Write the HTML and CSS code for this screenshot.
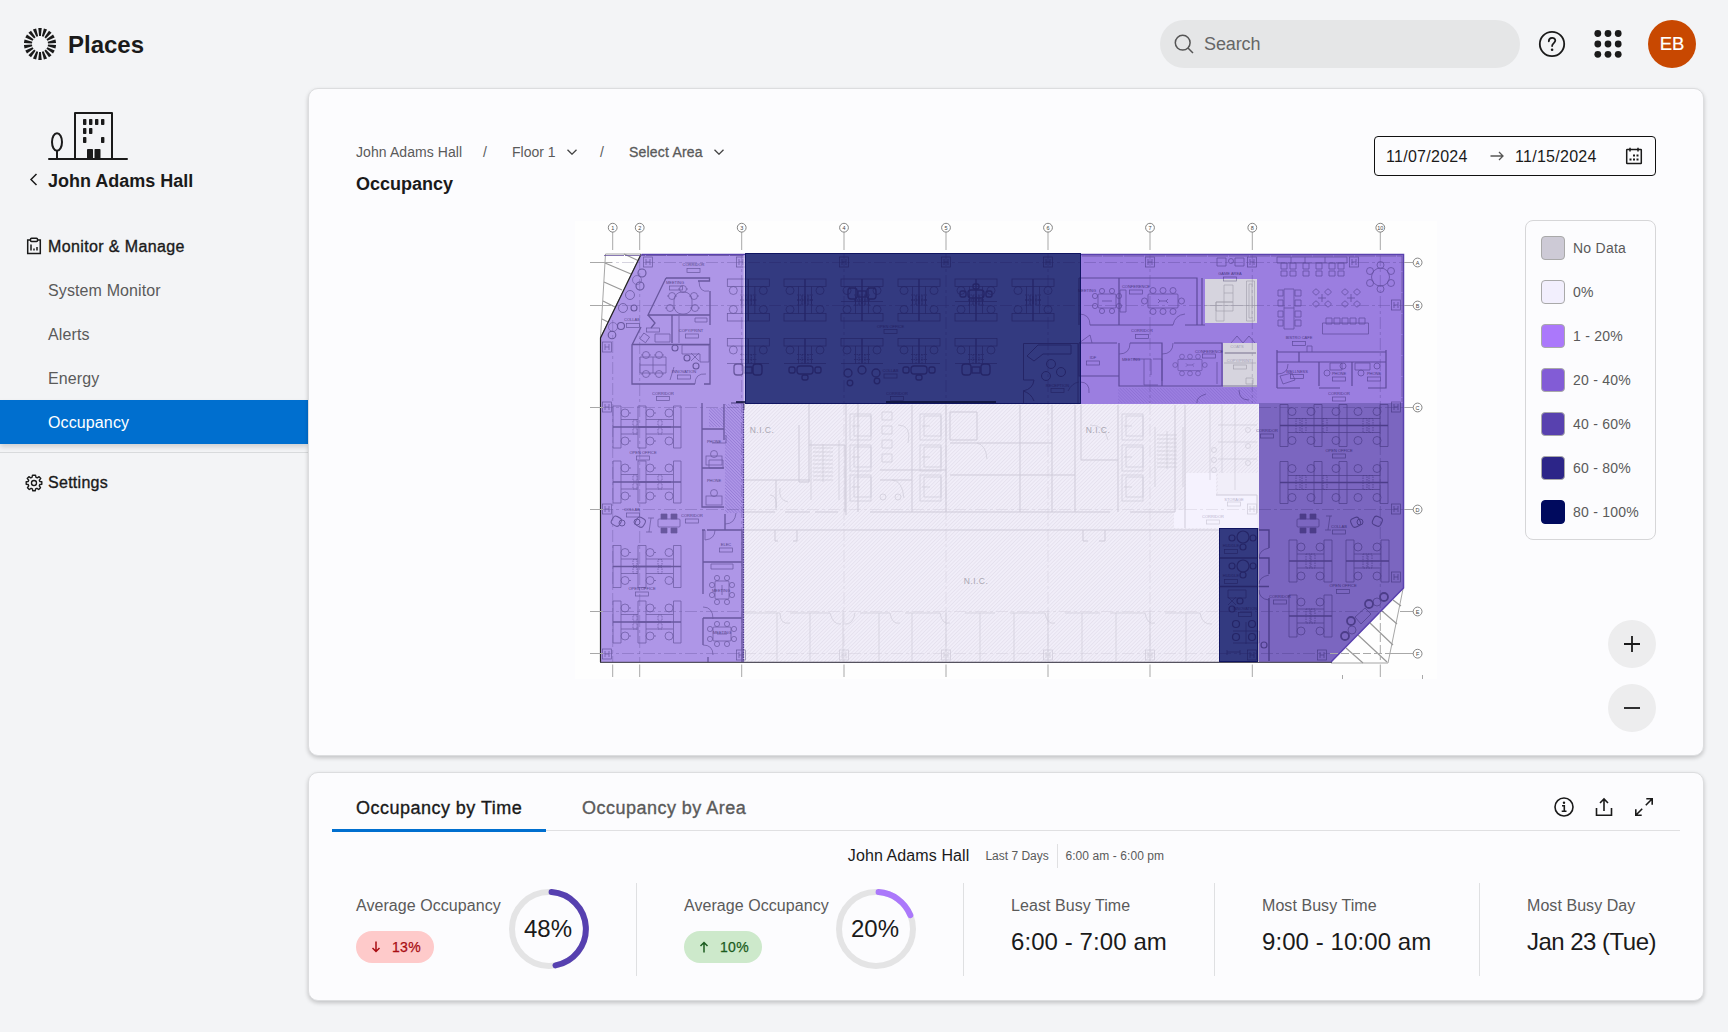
FILE: index.html
```html
<!DOCTYPE html>
<html lang="en">
<head>
<meta charset="utf-8">
<title>Places - Occupancy</title>
<link rel="stylesheet" href="styles.css">
</head>
<body>
<header class="topbar">
  <div class="brand">
    <svg class="logo" width="32" height="32" viewBox="-16 -16 32 32">
      <defs><path id="ray" d="M-1.700-16H1.700L.9-8H-.9Z"/><g id="rays"><use href="#ray"/><use href="#ray" transform="rotate(20)"/><use href="#ray" transform="rotate(40)"/><use href="#ray" transform="rotate(60)"/><use href="#ray" transform="rotate(80)"/><use href="#ray" transform="rotate(100)"/><use href="#ray" transform="rotate(120)"/><use href="#ray" transform="rotate(140)"/><use href="#ray" transform="rotate(160)"/></g></defs>
      <use href="#rays"/><use href="#rays" transform="rotate(180)"/>
    </svg>
    <span class="brand-name">Places</span>
  </div>
  <div class="tools">
    <div class="search">
      <svg width="20" height="20" viewBox="0 0 20 20" fill="none" stroke="currentColor" stroke-width="1.500"><circle cx="8.700" cy="8.700" r="7.400"/><path d="M14 14l5 5"/></svg>
      <span>Search</span>
    </div>
    <svg class="help" width="28" height="28" viewBox="0 0 28 28" fill="none" stroke="#1a1a1a" stroke-width="1.800"><circle cx="14" cy="14" r="12.200"/><path d="M10.800 11.300c0-4.600 6.500-4.400 6.500-.7 0 2.400-3.200 2.600-3.200 5.400" stroke-linecap="round"/><circle cx="14.100" cy="19.700" r="1.300" fill="#1a1a1a" stroke="none"/></svg>
    <svg class="apps" width="28" height="28" viewBox="0 0 28 28" fill="#1a1a1a"><circle cx="3.800" cy="3.500" r="3.400"/><circle cx="14" cy="3.500" r="3.400"/><circle cx="24.200" cy="3.500" r="3.400"/><circle cx="3.800" cy="14" r="3.400"/><circle cx="14" cy="14" r="3.400"/><circle cx="24.200" cy="14" r="3.400"/><circle cx="3.800" cy="24.300" r="3.400"/><circle cx="14" cy="24.300" r="3.400"/><circle cx="24.200" cy="24.300" r="3.400"/></svg>
    <div class="avatar">EB</div>
  </div>
</header>
<div class="shell">
  <nav class="sidebar">
    <svg class="building" width="80" height="50" viewBox="0 0 80 50" fill="none" stroke="#1a1a1a" stroke-width="2" stroke-linecap="round" stroke-linejoin="round">
      <path d="M1 48H79M27 48V2H64V48M9 47V40"/><ellipse cx="9" cy="31" rx="5" ry="8.800"/>
      <g fill="#1a1a1a" stroke="none"><rect x="35" y="8" width="3.400" height="6" rx=".8"/><rect x="41" y="8" width="3.400" height="6" rx=".8"/><rect x="47" y="8" width="3.400" height="6" rx=".8"/><rect x="53" y="8" width="3.400" height="6" rx=".8"/><rect x="35" y="17" width="3.400" height="6" rx=".8"/><rect x="41" y="17" width="3.400" height="6" rx=".8"/><rect x="35" y="26" width="3.400" height="6" rx=".8"/><rect x="53" y="26" width="3.400" height="6" rx=".8"/><rect x="39" y="38" width="6" height="10" rx=".8"/><rect x="46.500" y="38" width="6" height="10" rx=".8"/></g>
    </svg>
    <div class="site"><svg width="9" height="14" viewBox="0 0 9 14" fill="none" stroke="#1a1a1a" stroke-width="1.500"><path d="M7.500 1L2 6.500l5.500 5.500"/></svg><span>John Adams Hall</span></div>
    <div class="group">
      <svg width="16" height="18" viewBox="0 0 16 18" fill="none" stroke="#1a1a1a" stroke-width="1.500"><path d="M4 3H1.700V16.500H14.300V3H12"/><rect x="4.500" y="1.200" width="7" height="3.300" rx="1"/><path d="M5 7.500V13.500M8 11.500V13.500M11 10V13.500"/></svg>
      <span class="group-name">Monitor &amp; Manage</span>
    </div>
    <a class="item">System Monitor</a>
    <a class="item">Alerts</a>
    <a class="item">Energy</a>
    <a class="item active">Occupancy</a>
    <div class="group settings">
      <svg width="18" height="18" viewBox="-9 -9 18 18" fill="none" stroke="#1a1a1a" stroke-width="1.400" stroke-linejoin="round"><circle r="2.500"/><path d="M-1.500-7.800H1.500L2-5.700L3.300-5.100L5.100-6.300L6.800-4.600L5.300-2.800L5.800-1.500L7.800-1.200V1.200L5.800 1.500L5.300 2.800L6.500 4.700L4.700 6.500L2.900 5.300L1.600 5.800L1.200 7.800H-1.200L-1.600 5.800L-2.900 5.300L-4.700 6.500L-6.500 4.700L-5.300 2.800L-5.800 1.500L-7.800 1.200V-1.200L-5.800-1.500L-5.300-2.800L-6.800-4.600L-5.100-6.300L-3.300-5.100L-2-5.700Z"/></svg>
      <span class="group-name">Settings</span>
    </div>
  </nav>
  <main class="main">
    <section class="card map-card">
      <div class="map-head">
        <div>
          <div class="crumbs">
            <span class="c-site">John Adams Hall</span><span class="slash">/</span><span class="c-floor">Floor 1</span>
            <svg class="chev" width="10" height="6" viewBox="0 0 10 6"><path d="M.5.7L5 5.200L9.500.7"/></svg>
            <span class="slash s2">/</span><span class="c-area">Select Area</span>
            <svg class="chev" width="10" height="6" viewBox="0 0 10 6"><path d="M.5.7L5 5.200L9.500.7"/></svg>
          </div>
          <h1>Occupancy</h1>
        </div>
        <div class="dates">
          <span class="date">11/07/2024</span>
          <svg width="14" height="10" viewBox="0 0 14 10" fill="none" stroke="#555" stroke-width="1.300"><path d="M.5 5H13M9 1L13 5L9 9"/></svg>
          <span class="date">11/15/2024</span>
          <svg class="cal" width="18" height="18" viewBox="0 0 18 18" fill="none" stroke="#1a1a1a" stroke-width="1.500"><rect x="1.700" y="2.500" width="14.600" height="14" rx=".5"/><path d="M5 .7V4.500M13 .7V4.500"/><path d="M8 8.500H10M11.500 8.500H13.500M4.500 12.500H6.500M8 12.500H10M11.500 12.500H13.500" stroke-width="2"/></svg>
        </div>
      </div>
      <div class="map-body">
        <svg class="plan" width="862" height="458" viewBox="575 221 862 458" fill="none">
          <defs>
            <pattern id="hatch" width="2.600" height="2.600" patternUnits="userSpaceOnUse" patternTransform="rotate(45)"><path d="M0 0V2.600" stroke="#e4e0ed" stroke-width="1.600"/></pattern>
            <pattern id="hatch-dark" width="2.200" height="2.200" patternUnits="userSpaceOnUse" patternTransform="rotate(-45)"><path d="M0 0V2.200" stroke="#6a50b8" stroke-width=".9"/></pattern>
            <g id="seat"><circle r="3.500"/><path d="M-3.500 0H-5M3.500 0H5"/></g>
            <g id="bay"><rect x="-21" y="0" width="42" height="7.500"/><path d="M0 0V25" stroke-width="1.300"/><path d="M-6.500 7.500V25M6.500 7.500V25"/><path d="M-8 16H8M-8 21H8M-3 16V25M3 16V25" stroke-dasharray="1.500 1"/><circle cx="-15" cy="11.500" r="4"/><circle cx="15" cy="11.500" r="4"/></g>
            <g id="bay2"><use href="#bay"/><use href="#bay" transform="matrix(1 0 0 -1 0 42)"/></g>
            <g id="desk"><path d="M0 0H8V42H0ZM8 13.500H25M8 28H25"/><path d="M0 21H33" stroke-width="1.300"/><circle cx="12" cy="7" r="4"/><circle cx="12" cy="35" r="4"/><path d="M16 7H18M16 35H18"/><path d="M20 14h4v6h-4zM20 22h4v6h-4z" stroke-dasharray="1.500 1"/></g>
            <g id="desks"><use href="#desk"/><use href="#desk" x="25"/><path d="M60.500 0H68V42H60.500ZM50 13.500H60M50 28H60"/><path d="M33 21H68" stroke-width="1.300"/><circle cx="56" cy="7" r="4"/><circle cx="56" cy="35" r="4"/></g>
            <g id="desks-r"><path d="M0 0H8V42H0ZM35 0H43V42H35ZM8 14H35M8 28H35"/><path d="M0 21H43" stroke-width="1.300"/><circle cx="12" cy="7" r="4"/><circle cx="31" cy="7" r="4"/><circle cx="12" cy="36" r="4"/><circle cx="31" cy="36" r="4"/><path d="M17 14h4v14h-4zM22 14h4v14h-4z" stroke-dasharray="1.500 1"/></g>
            <g id="desks-w"><path d="M0 0H8V42H0ZM34 0H42V42H34ZM59 0H67V42H59ZM100 0H108V42H100ZM8 14H100M8 28H100"/><path d="M0 21H108" stroke-width="1.300"/><circle cx="12" cy="7" r="4"/><circle cx="31" cy="7" r="4"/><circle cx="56" cy="7" r="4"/><circle cx="78" cy="7" r="4"/><circle cx="97" cy="7" r="4"/><circle cx="12" cy="36" r="4"/><circle cx="31" cy="36" r="4"/><circle cx="56" cy="36" r="4"/><circle cx="78" cy="36" r="4"/><circle cx="97" cy="36" r="4"/><path d="M16 14h4v14h-4zM22 14h4v14h-4zM43 14h4v14h-4zM83 14h4v14h-4zM89 14h4v14h-4z" stroke-dasharray="1.500 1"/></g>
            <g id="col"><rect x="-4.500" y="-5" width="9" height="10"/><path d="M-2-3V3M2-3V3M-2 0H2"/></g>
            <g id="table"><rect x="-8" y="-4" width="16" height="8" rx="3"/><rect x="-16" y="-3" width="6" height="6" rx="2"/><rect x="10" y="-3" width="6" height="6" rx="2"/><rect x="-3" y="5" width="6" height="5" rx="2"/></g>
            <g id="sofa"><rect x="-14" y="-6" width="9" height="11" rx="3"/><rect x="5" y="-6" width="9" height="11" rx="3"/><rect x="-4" y="-3" width="8" height="6"/></g>
            <g id="meet"><rect x="-9" y="-7" width="18" height="14" rx="1"/><circle cx="-12" cy="-5" r="2.600"/><circle cx="-12" cy="5" r="2.600"/><circle cx="12" cy="-5" r="2.600"/><circle cx="12" cy="5" r="2.600"/><circle cx="-5" cy="-10" r="2.600"/><circle cx="5" cy="-10" r="2.600"/><circle cx="-5" cy="10" r="2.600"/><circle cx="5" cy="10" r="2.600"/><path d="M-5 0H5"/></g>
            <g id="long"><rect x="-15" y="-7" width="30" height="14" rx="1"/><path d="M-5-2L-3 0L-5 2M-3 0H3M5-2L3 0L5 2"/><circle cx="-10" cy="-10.500" r="3"/><circle cy="-10.500" r="3"/><circle cx="10" cy="-10.500" r="3"/><circle cx="-10" cy="10.500" r="3"/><circle cy="10.500" r="3"/><circle cx="10" cy="10.500" r="3"/><circle cx="-18.500" r="3"/><circle cx="18.500" r="3"/></g>
            <g id="cafe"><path d="M-4 0H4M0-4V4"/><rect x="-2.500" y="-11" width="5" height="5" rx="1" transform="rotate(45)"/><rect x="-2.500" y="-11" width="5" height="5" rx="1" transform="rotate(135)"/><rect x="-2.500" y="-11" width="5" height="5" rx="1" transform="rotate(225)"/><rect x="-2.500" y="-11" width="5" height="5" rx="1" transform="rotate(315)"/></g>
            <g id="quad"><rect x="-11" y="-4" width="22" height="8" rx="1"/><path d="M-8-9h6v5h-6zM2-9h6v5h-6zM-8 5h6v5h-6zM2 5h6v5h-6z" fill="#150c48"/></g>
            <g id="tag"><rect x="-6.500" y="0" width="13" height="4"/></g>
            <g id="stair"><path d="M0 0H20M0 4H20M0 8H20M0 12H20M0 16H20M0 20H20M0 24H20M0 28H20M0 32H20M10-4V34"/><path d="M-2-8V52M26-8V52"/></g>
            <g id="lift"><rect width="21" height="26"/><rect x="4" y="2" width="17" height="20"/><path d="M2 12H10"/></g>
          </defs>
          <rect x="575" y="221" width="862" height="458" fill="#fefefe"/>
          <!-- terraces -->
          <path d="M605.500 254H641L600.500 338ZM1403 589L1388 663H1331" stroke="#8f8f8f" stroke-width=".8"/>
          <path d="M624 254L639 261M605 263L631 274M604 282L622 290M603 301L615 307M602 319L608 322M1346 648L1363 663M1358 635L1387 662M1370 623L1393 645M1382 611L1397 624M1393 600L1401 606" stroke="#999" stroke-width="1.200"/>
          <!-- occupancy zones -->
          <path d="M641.500 254H744.500V662H600.500V338Z" fill="#ae96e7"/>
          <rect x="744" y="403" width="515" height="259" fill="#f1eef9"/>
          <path d="M744 403H1258V473H1218V530H744Z" fill="url(#hatch)"/><path d="M744 530H1219V662H744Z" fill="url(#hatch)"/>
          <path d="M1186 473H1216V495H1257V528H1174V510H1186Z" fill="#f5f2fe"/>
          <rect x="1081" y="254" width="323" height="150" fill="#9b7ee0"/>
          <path d="M1259 403H1404V588L1331 662H1259Z" fill="#7b66c0"/>
          <path d="M725 404H743V513H725ZM709 408H724V427H709Z" fill="url(#hatch-dark)" opacity=".6"/>
          <path d="M1118 388H1257V403H1118Z" fill="url(#hatch-dark)" opacity=".45"/>
          <rect x="745" y="253" width="336" height="151" fill="#333a80"/>
          <rect x="1219" y="528" width="39" height="134" fill="#333a80"/>
          <path d="M1205 279H1257V323H1205ZM1223 343H1257V387H1223Z" fill="#d6d4de"/>
          <!-- core linework -->
          <g stroke="#cfcbd9" stroke-width=".7">
            <path d="M744 530H1219M775 530V541H778M797 530V541H793M744 480H776V508M776 480H810M744 512H775M785 512H810M815 512H838M870 512H1110M1130 512H1175M1175 405V512M1216 495H1257V513M1185 405V528M1081 405V460H1118M1118 405V512M1083 530V541H1088M1105 530V541H1099M799 425V482H809V403M809 445H845V512M846 403V515M858 403V512M912 405V512M946 405V512M950 412H977V440H950ZM1020 405V512M1052 405V512M1075 405V512M950 443H1020M1020 443H1052M950 475H1075M880 480H912M880 470H946" stroke-width="1"/>
            <path d="M744 613H780M790 613H830M860 613H890M905 613H940M965 613H995M1010 613H1045M1065 613H1100M1110 613H1145M1165 613H1200M777 613V661M810 613V661M843 610V661M879 613V661M912 613V661M946 610V661M980 613V661M1014 613V661M1048 610V661M1082 613V661M1116 613V661M1150 610V661M1186 613V661"/>
            <path d="M780 613q0 12 10 10M830 613q3 12 11 11M855 613q-2 12-10 11M890 613q2 12 10 10M940 613q2 12 10 10M1045 613q2 12 10 10M1145 613q2 12 10 10M1200 613q2 12 12 11M770 495q8 0 6 15M788 502q-10-2-8-14M1090 425q15 0 18 15M977 443q9 2 10 16"/>
            <use href="#stair" x="813" y="448"/><use href="#stair" x="1157" y="435"/>
            <use href="#lift" x="850" y="414"/><use href="#lift" x="850" y="445"/><use href="#lift" x="850" y="475"/><use href="#lift" x="920" y="414"/><use href="#lift" x="920" y="445"/><use href="#lift" x="920" y="475"/><use href="#lift" x="1122" y="414"/><use href="#lift" x="1122" y="445"/><use href="#lift" x="1122" y="475"/>
            <path d="M882 412h10v8h-10zM882 426h10v8h-10zM882 440h10v8h-10zM882 454h10v8h-10zM898 425q14 0 10 18M892 480q10 0 12 18M1210 405V480M1222 405V473M1235 405V490M1218 425H1257M1218 442H1257M1218 459H1257"/>
            <circle cx="883" cy="497" r="3"/><circle cx="898" cy="497" r="3"/><circle cx="1214" cy="450" r="2.500"/><circle cx="1214" cy="460" r="2.500"/><circle cx="1214" cy="470" r="2.500"/><circle cx="1248" cy="430" r="2.500"/><circle cx="1248" cy="446" r="2.500"/><circle cx="1248" cy="463" r="2.500"/>
            <use href="#tag" x="1213" y="520"/><use href="#tag" x="1234" y="502"/><use href="#col" x="844" y="655"/><use href="#col" x="946" y="655"/><use href="#col" x="1048" y="655"/><use href="#col" x="1150" y="655"/><use href="#col" x="1252" y="509"/>
            <path d="M844 403V662M946 403V662M1048 403V662M1150 403V662M744 509.500H1258M744 611.500H1219M744 653.500H1219" stroke-dasharray="12 3 3 3" opacity=".6"/>
          </g>
          <!-- furnished areas linework -->
          <g stroke="#150c48" stroke-width=".7" opacity=".45">
            <path d="M601 262.500H1404M601 305.500H1404M601 407.500H744M1259 407.500H1404M601 509.500H744M1259 509.500H1404M601 611.500H744M1219 611.500H1385M601 653.500H744M1219 653.500H1340M612.700 320V662M639.700 258V662M741.700 254V662M844 254V403M946 254V403M1048 254V403M1150 254V403M1252.300 254V403M1380.300 254V610" stroke-dasharray="12 3 3 3" stroke-width=".5" opacity=".75"/>
            <use href="#bay2" x="748.300" y="279"/><use href="#bay2" x="805" y="279"/><use href="#bay2" x="862" y="279"/><use href="#bay2" x="919" y="279"/><use href="#bay2" x="976" y="279"/><use href="#bay2" x="1033" y="279"/>
            <use href="#bay" x="748.300" y="338.500"/><use href="#bay" x="805" y="338.500"/><use href="#bay" x="862" y="338.500"/><use href="#bay" x="919" y="338.500"/><use href="#bay" x="976" y="338.500"/>
            <path d="M727 363.500H769M784 363.500H826M841 363.500H883M898 363.500H940M955 363.500H997M841 301.500H883M955 301.500H997"/>
            <g stroke-width="1.300"><use href="#sofa" x="748" y="370"/><use href="#table" x="805" y="370"/><use href="#table" x="919" y="370"/><use href="#sofa" x="976" y="370"/><use href="#sofa" x="862" y="294"/><use href="#table" transform="matrix(1 0 0 -1 976 294)"/><circle cx="848" cy="373" r="4"/><circle cx="862" cy="370" r="4"/><circle cx="850" cy="383" r="2.800"/><circle cx="876" cy="373" r="4"/><circle cx="877" cy="381" r="2.800"/></g>
            <g stroke-width="1"><path d="M1023.500 343.500H1078V403M1023.500 343.500V380H1034M1023.500 391V403M1034 380q-1 9-11 11q8 2 11 10M1043 345H1071V354H1043L1034 361L1027 356L1038 345Z"/><circle cx="1051" cy="364" r="4.500"/><circle cx="1061" cy="372" r="4.500"/><circle cx="1046" cy="376" r="4.500"/></g>
            <use href="#desks" x="613" y="406"/><use href="#desks" x="613" y="461"/><use href="#desks" x="613" y="545.500"/><use href="#desks" x="613" y="601"/>
            <use href="#desks-w" x="1280" y="404.500"/><use href="#desks-w" x="1280" y="461.500"/>
            <use href="#desks-r" x="1289" y="540"/><use href="#desks-r" x="1346" y="540"/><use href="#desks-r" x="1289" y="595"/>
            <use href="#quad" x="669" y="523"/><use href="#quad" x="1308" y="523"/>
            <path d="M648 518h6M651 518L649 532M646 532h6M1326 516h6M1330 516L1328 530M1325 530h6"/>
            <g stroke-width="1"><rect x="612" y="517" width="9" height="9" rx="3" transform="rotate(30 617 521)"/><circle cx="622" cy="523" r="3"/><rect x="636" y="518" width="9" height="9" rx="3" transform="rotate(30 641 522)"/><circle cx="637" cy="522" r="3"/><rect x="1351" y="518" width="9" height="9" rx="3" transform="rotate(-25 1355 522)"/><circle cx="1360" cy="522" r="3"/><rect x="1373" y="517" width="9" height="9" rx="3" transform="rotate(25 1378 521)"/></g>
            <!-- west rooms -->
            <g stroke-width="1.300"><path d="M666 278H709.500V281H698M666 278L648 315H710V291M648 315L655 323L651 328M710 315V325M672 315V343M710 338V384H704M641 327L632 345V384H695M632 344.500H710M702 403V507H724M702 429H724M702 468H724M702 530H705M707 530H742V662M703 530V594M703 562H742M703 618H742M703 618V645M708 657V662M724 404V440M731 403H744V410M725 514V530"/></g>
            <path d="M699 281q0 12 10 10M695 384q0-11 11-10M705 530V540q10-1 10-10M703 607q10 0 10 12M703 645q10 0 10 10M725 524q10 0 11-11M709 468h14v-8h-14zM712 443h14v-8M679 316V343M695 318h12v4h-12z"/>
            <rect x="674" y="292" width="18" height="22" rx="8"/><use href="#seat" x="672" y="296"/><use href="#seat" x="670" y="308"/><use href="#seat" x="694" y="296"/><use href="#seat" x="695" y="308"/><use href="#seat" x="683" y="289"/>
            <path d="M640 357h26v16h-26zM653 357v16M640 365h26M682 345h27v17h-9v-8h-18z"/><use href="#seat" x="646" y="355"/><use href="#seat" x="659" y="355"/><use href="#seat" x="646" y="374"/><use href="#seat" x="659" y="374"/>
            <path d="M674 367L670 380M691 353l8 8M699 353l-8 8"/>
            <g stroke-width="1.100"><circle cx="642" cy="273" r="4"/><circle cx="637" cy="280" r="4.500" stroke-width=".6"/><circle cx="640" cy="286" r="4"/><circle cx="630" cy="295" r="4.500" stroke-width=".8"/><circle cx="623" cy="308" r="4.500" stroke-width=".8"/><circle cx="634" cy="308" r="3"/><circle cx="613" cy="327" r="4.500" stroke-width=".6"/><circle cx="621" cy="326" r="3.500"/><circle cx="612" cy="335" r="3.800"/><circle cx="675" cy="348" r="3"/><circle cx="687" cy="358" r="3"/><circle cx="696" cy="366" r="3"/></g><rect x="641" y="334" width="7" height="7" transform="rotate(35 644 338)"/><path d="M655 334h15v8h-15z"/>
            <use href="#meet" transform="translate(722 590) rotate(90)"/><use href="#meet" x="722" y="634"/><rect x="706" y="456" width="16" height="9"/><circle cx="714" cy="454" r="3.500"/><rect x="706" y="496" width="16" height="9"/><circle cx="714" cy="493" r="3.500"/><path d="M711 564h22v5h-22z"/>
            <!-- east rooms -->
            <g stroke-width="1.200"><path d="M1079 278H1197V325H1193M1079 278V325M1119 278V325M1090 325H1173M1185 325H1205M1202 278V325M1079 343H1117M1079 343V376H1119M1119 343V386H1257M1130 343H1162V386M1174 343H1222V386M1225 353H1256M1277 352H1386M1277 362H1386M1277 350V388M1386 350V388H1368M1319 362V386M1352 362V386M1319 388H1340M1277 388H1300M1299 352V362"/></g>
            <path d="M1079 314q11 0 11 11M1173 325q2-10 12-11M1079 343l11-8 2 8M1119 354q11 0 11-11M1162 354q11 0 11-11M1231 343l6-7 6 7 6-7 6 7M1277 374q11 0 11-10M1307 352v-6h5v6M1068 391q4-8 11-9M1080 382q10 0 9 11M1206 394q-10 3-9 9M1239 390q0 10 10 10"/>
            <use href="#meet" x="1107" y="301"/><use href="#long" x="1163" y="301"/><g transform="translate(1190 365) scale(.8)"><use href="#long"/></g>
            <path d="M1120 290h6v22h-6zM1133 359h18v16M1144 359v26h14M1153 359h9v22M1217 362v22"/>
            <path d="M1277 257h70v6h-70zM1291 257v6M1305 257v6M1325 257v6"/>
            <path d="M1281 263h6v6h-6zM1281 271h6v5h-6zM1290 263h6v6h-6zM1290 271h6v5h-6zM1303 263h6v6h-6zM1303 271h6v5h-6zM1316 263h6v6h-6zM1316 271h6v5h-6zM1329 263h6v6h-6zM1329 271h6v5h-6zM1338 263h6v6h-6zM1338 271h6v5h-6z"/>
            <circle cx="1380.500" cy="277" r="9"/><circle cx="1380.500" cy="265" r="3.500"/><circle cx="1380.500" cy="289" r="3.500"/><circle cx="1370" cy="271" r="3.500"/><circle cx="1370" cy="283" r="3.500"/><circle cx="1391" cy="271" r="3.500"/><circle cx="1391" cy="283" r="3.500"/>
            <path d="M1284 289h10v40h-10zM1284 308h10M1278 290h5v6h-5zM1278 300h5v6h-5zM1278 311h5v6h-5zM1278 320h5v6h-5zM1295 290h6v6h-6zM1295 300h6v6h-6zM1295 311h6v6h-6zM1295 320h6v6h-6z"/>
            <use href="#cafe" x="1322" y="298"/><use href="#cafe" x="1351" y="298"/>
            <path d="M1322.500 323h46v11h-46zM1326 318h6v6h-6zM1334 318h6v6h-6zM1342 318h6v6h-6zM1350 318h6v6h-6zM1359 318h6v6h-6z"/>
            <path d="M1217 258h9v8h-9zM1235 258h9v8h-9zM1280 376l12-3 3 7-12 4zM1330 363h12v7h-12zM1355 363h15v7h-15z"/><circle cx="1231" cy="261" r="2.500"/><circle cx="1327" cy="373" r="3"/><circle cx="1343" cy="366" r="3"/><circle cx="1361" cy="373" r="3"/><circle cx="1377" cy="366" r="3"/>
            <!-- south-east rooms -->
            <g stroke-width="1.400"><path d="M1219 558H1258M1219 586.500H1269M1259 530H1269V548M1259 558H1269V574M1269 598V661M1258 528V661"/></g>
            <path d="M1269 548q-10 2-10 10M1269 575q-10 2-10 9M1259 590q0 9 10 10M1228 590h18v8h-18zM1228 597l8 8M1236 597l-8 8M1233 631h26v12h-26M1246 622v22M1227 652h13M1227 650v5M1240 650v5M1355 617l10-9 6 6-10 10z"/>
            <g stroke-width="1.200"><circle cx="1243" cy="537" r="6"/><circle cx="1232" cy="538" r="3"/><circle cx="1253" cy="538" r="3"/><circle cx="1243" cy="547" r="3"/><circle cx="1243" cy="566" r="6"/><circle cx="1232" cy="566" r="3"/><circle cx="1253" cy="566" r="3"/><circle cx="1243" cy="575" r="3"/><circle cx="1240" cy="601" r="3"/><circle cx="1232" cy="609" r="3"/><circle cx="1236" cy="624" r="3.500"/><circle cx="1252" cy="624" r="3.500"/><circle cx="1236" cy="637" r="3.500"/><circle cx="1252" cy="637" r="3.500"/><circle cx="1264" cy="645" r="3"/></g>
            <g stroke-width="1.800"><circle cx="1345" cy="636" r="4"/><circle cx="1351" cy="621" r="4"/><circle cx="1369" cy="604" r="4"/><circle cx="1384" cy="597" r="4"/></g><circle cx="1352" cy="630" r="4"/><circle cx="1377" cy="602" r="4"/>
            <!-- columns -->
            <use href="#col" x="648" y="262"/><use href="#col" x="741" y="262"/><use href="#col" x="844" y="262"/><use href="#col" x="946" y="262"/><use href="#col" x="1048" y="262"/><use href="#col" x="1150" y="262"/><use href="#col" x="1252" y="262"/><use href="#col" x="1354" y="262"/><use href="#col" x="1396" y="305"/><use href="#col" x="1396" y="407"/><use href="#col" x="1396" y="509"/><use href="#col" x="1396" y="577"/><use href="#col" x="607" y="347"/><use href="#col" x="607" y="407"/><use href="#col" x="607" y="509"/><use href="#col" x="607" y="654"/><use href="#col" x="741" y="655"/><use href="#col" x="1252" y="655"/><use href="#col" x="1322" y="655"/>
            <!-- room number boxes -->
            <use href="#tag" x="693.500" y="268.500"/><use href="#tag" x="676" y="286"/><use href="#tag" x="633" y="323.500"/><use href="#tag" x="653" y="328"/><use href="#tag" x="692" y="334"/><use href="#tag" x="684" y="375"/><use href="#tag" x="663" y="396.500"/><use href="#tag" x="643" y="456"/><use href="#tag" x="633" y="513"/><use href="#tag" x="692" y="519"/><use href="#tag" x="726" y="548"/><use href="#tag" x="642" y="592"/><use href="#tag" x="890.500" y="329.500"/><use href="#tag" x="890.500" y="374"/><use href="#tag" x="897" y="396.500"/><use href="#tag" x="1057.500" y="388.500"/><use href="#tag" x="1142" y="334.500"/><use href="#tag" x="1093" y="361"/><use href="#tag" x="1136" y="290"/><use href="#tag" x="1209" y="354"/><use href="#tag" x="1230" y="277"/><use href="#tag" x="1299" y="341.500"/><use href="#tag" x="1297" y="374.500"/><use href="#tag" x="1339" y="377"/><use href="#tag" x="1374" y="377"/><use href="#tag" x="1339" y="397"/><use href="#tag" x="1267" y="434"/><use href="#tag" x="1339" y="454"/><use href="#tag" x="1339" y="530"/><use href="#tag" x="1343" y="589.500"/><use href="#tag" x="1280" y="600"/><use href="#tag" x="1231" y="549.500"/><use href="#tag" x="1231" y="579.500"/><use href="#tag" x="1245" y="612.500"/>
          </g>
          <g class="room">
            <text x="693.500" y="266">CORRIDOR</text><text x="675" y="283.500">MEETING</text><text x="632" y="321">COLLAB</text><text x="691" y="331.500">COPY/PRINT</text><text x="684" y="373">INNOVATION</text><text x="663" y="394.500">CORRIDOR</text><text x="643" y="454">OPEN OFFICE</text><text x="632" y="511">COLLAB</text><text x="692" y="516.500">CORRIDOR</text><text x="726" y="546">ELEC</text><text x="642" y="590">OPEN OFFICE</text><text x="714" y="443">PHONE</text><text x="714" y="481.500">PHONE</text><text x="721" y="592">MEETING</text><text x="722" y="634">MEETING</text>
            <text x="890.500" y="327.500">OPEN OFFICE</text><text x="890.500" y="371.500">COLLAB</text><text x="897" y="394.500">CORRIDOR</text><text x="1057.500" y="386.500">RECEPTION</text><text x="1087" y="292">MEETING</text><text x="1136" y="287.500">CONFERENCE</text><text x="1142" y="332">CORRIDOR</text><text x="1093" y="358.500">IDF</text><text x="1131" y="361">MEETING</text><text x="1209" y="352.500">CONFERENCE</text><text x="1230" y="275">GAME AREA</text><text x="1299" y="339">BISTRO CAFE</text><text x="1297" y="372.500">WELLNESS</text><text x="1339" y="375">PHONE</text><text x="1374" y="375">PHONE</text><text x="1339" y="395">CORRIDOR</text><text x="1267" y="431.500">CORRIDOR</text><text x="1339" y="452">OPEN OFFICE</text><text x="1339" y="528">COLLAB</text><text x="1343" y="587">OPEN OFFICE</text><text x="1280" y="597.500">CORRIDOR</text><text x="1231" y="547">HUDDLE</text><text x="1231" y="577">HUDDLE</text><text x="1245" y="610">INNOVATION</text>
            <g opacity=".45"><text x="1237" y="347.500">COATS</text><text x="1239" y="362">COPY/PRINT</text><text x="1234" y="500.500">STORAGE</text><text x="1213" y="518">CORRIDOR</text></g>
          </g>
          <g stroke="#9d9aa7" stroke-width=".6"><path d="M1216 302h8v19h-8zM1224 285h9v17h-9zM1224 293h9M1216 302h17v9h-17zM1246.500 281h8v40h-8zM1249 284h3v34h-3zM1205 305.500h52M1224 353h32M1224 363h32M1246 378h7v6h-7z"/><use href="#tag" x="1240" y="365"/></g>
          <!-- outer walls -->
          <path d="M641 254.500L600.500 338V662.300" stroke="#222" stroke-width="1.200"/><path d="M600 662.400H1332" stroke="#55525f" stroke-width="1.200"/>
          <path d="M641.500 254.500H745M1081 254.500H1403.500V588L1331 662" stroke="#5a41ae" stroke-width="1.500"/><path d="M604 255.500H743M1082 256H1402V402" stroke="#6a55a0" stroke-width=".8" stroke-dasharray="20 1"/>
          <path d="M743.500 404V662" stroke="#51408c" stroke-width="1.300" stroke-dasharray="1.500 1"/>
          <path d="M744 256V403" stroke="#c9bdeb"/>
          <path d="M745.500 253.500H1080.500V403.500H745.500Z" stroke="#101562"/><path d="M736 402H745M886 402H996" stroke="#090c32" stroke-width="1.500"/>
          <rect x="1219.500" y="528.500" width="38" height="133" stroke="#101562"/>
          <!-- grid references -->
          <g stroke="#a8a8a8" stroke-width="1"><path d="M612.700 232V250M639.700 232V250M741.700 232V250M844 232V250M946 232V250M1048 232V250M1150 232V250M1252.300 232V250M1380.300 232V250M612.700 664.500V677M639.700 664.500V677M741.700 664.500V677M844 664.500V677M946 664.500V677M1048 664.500V677M1150 664.500V677M1252.300 664.500V677M1380.300 664.500V677M1342.500 675V679M1422.500 675V679M590 262.500H612M590 305.500H612M590 407.500H603M590 509.500H603M590 611.500H603M590 653.500H603M1404 262.500H1413M1404 305.500H1413M1404 407.500H1413M1404 509.500H1413M1400 611.500H1413M1385 653.500H1413"/>
          <path d="M1330 653.500H1384M1380.300 612V660" stroke-dasharray="8 3"/></g>
          <g stroke="#777" stroke-width=".9" fill="#fff"><circle cx="612.700" cy="227.700" r="4.400"/><circle cx="639.700" cy="227.700" r="4.400"/><circle cx="741.700" cy="227.700" r="4.400"/><circle cx="844" cy="227.700" r="4.400"/><circle cx="946" cy="227.700" r="4.400"/><circle cx="1048" cy="227.700" r="4.400"/><circle cx="1150" cy="227.700" r="4.400"/><circle cx="1252.300" cy="227.700" r="4.400"/><circle cx="1380.300" cy="227.700" r="4.400"/><circle cx="1417.600" cy="262.500" r="4.400"/><circle cx="1417.600" cy="305.500" r="4.400"/><circle cx="1417.600" cy="407.500" r="4.400"/><circle cx="1417.600" cy="509.500" r="4.400"/><circle cx="1417.600" cy="611.500" r="4.400"/><circle cx="1417.600" cy="653.700" r="4.400"/></g>
          <g class="ref"><text x="612.700" y="229.700">1</text><text x="639.700" y="229.700">2</text><text x="741.700" y="229.700">3</text><text x="844" y="229.700">4</text><text x="946" y="229.700">5</text><text x="1048" y="229.700">6</text><text x="1150" y="229.700">7</text><text x="1252.300" y="229.700">8</text><text x="1380.300" y="229.700">10</text><text x="1417.600" y="264.500">A</text><text x="1417.600" y="307.500">B</text><text x="1417.600" y="409.500">C</text><text x="1417.600" y="511.500">D</text><text x="1417.600" y="613.500">E</text><text x="1417.600" y="655.700">F</text></g>
          <g class="nic"><text x="762" y="433">N.I.C.</text><text x="1098" y="433">N.I.C.</text><text x="976" y="584">N.I.C.</text></g>
        </svg>
        <div class="map-side">
          <ul class="legend">
            <li><i class="sw none"></i>No Data</li><li><i class="sw zero"></i>0%</li><li><i class="sw l1"></i>1 - 20%</li><li><i class="sw l2"></i>20 - 40%</li><li><i class="sw l3"></i>40 - 60%</li><li><i class="sw l4"></i>60 - 80%</li><li><i class="sw l5"></i>80 - 100%</li>
          </ul>
          <div class="zoom">
            <button><svg width="16" height="16" viewBox="0 0 16 16"><path d="M0 8H16M8 0V16"/></svg></button>
            <button><svg width="16" height="16" viewBox="0 0 16 16"><path d="M0 8H16"/></svg></button>
          </div>
        </div>
      </div>
    </section>
    <section class="card stats-card">
      <div class="tabs">
        <a class="tab on"><span>Occupancy by Time</span></a><a class="tab"><span>Occupancy by Area</span></a>
        <div class="actions">
          <svg width="20" height="20" viewBox="0 0 20 20" fill="none" stroke="#1a1a1a" stroke-width="1.600"><circle cx="10" cy="10" r="9"/><path d="M8 8.700H10.300V14M7.700 14.200H12.500"/><circle cx="10" cy="5.800" r="1.200" fill="#1a1a1a" stroke="none"/></svg>
          <svg width="20" height="20" viewBox="0 0 20 20" fill="none" stroke="#1a1a1a" stroke-width="1.600"><path d="M2.500 11V18.200H17.500V11M10 14V2M6 6L10 2L14 6"/></svg>
          <svg width="20" height="20" viewBox="0 0 20 20" fill="none" stroke="#1a1a1a" stroke-width="1.600"><path d="M12.300 1.800H18.200V7.700M18.200 1.800L11.800 8.200M1.800 12.300V18.200H7.700M1.800 18.200L8.200 11.800"/></svg>
        </div>
      </div>
      <div class="scope"><span class="scope-name">John Adams Hall</span><span class="small s-days">Last 7 Days</span><span class="small s-hours">6:00 am - 6:00 pm</span></div>
      <div class="stats">
        <div class="stat avg">
          <div><div class="label">Average Occupancy</div><div class="pill down"><svg width="10" height="12" viewBox="0 0 10 12"><path d="M5 .5V10.500M1.500 7L5 10.500L8.500 7"/></svg>13%</div></div>
          <div class="ring"><svg width="80" height="80" viewBox="-40 -40 80 80" fill="none" stroke-width="6"><circle r="37" stroke="#e4e4e5"/><path d="M2.600-36.900A37 37 0 0 1 6.500 36.400" stroke="#5640b0" stroke-linecap="round"/></svg><span>48%</span></div>
        </div>
        <div class="stat avg">
          <div><div class="label">Average Occupancy</div><div class="pill up"><svg width="10" height="12" viewBox="0 0 10 12"><path d="M5 11.500V1.500M1.500 5L5 1.500L8.500 5"/></svg>10%</div></div>
          <div class="ring"><svg width="80" height="80" viewBox="-40 -40 80 80" fill="none" stroke-width="6"><circle r="37" stroke="#e4e4e5"/><path d="M2.600-36.900A37 37 0 0 1 34.300-13.900" stroke="#ab78fb" stroke-linecap="round"/></svg><span>20%</span></div>
        </div>
        <div class="stat t1"><div class="label">Least Busy Time</div><div class="value">6:00 - 7:00 am</div></div>
        <div class="stat t2"><div class="label">Most Busy Time</div><div class="value">9:00 - 10:00 am</div></div>
        <div class="stat t3"><div class="label">Most Busy Day</div><div class="value">Jan 23 (Tue)</div></div>
      </div>
    </section>
  </main>
</div>
</body>
</html>
```
FILE: styles.css
```css
* { box-sizing: border-box; }
body { margin: 0; width: 1728px; height: 1032px; overflow: hidden; background: #f3f4f6; color: #1a1a1a; font-family: "Liberation Sans", Arial, sans-serif; font-size: 16px; white-space: nowrap; }
svg { display: block; flex: none; }
.topbar { height: 88px; display: flex; justify-content: space-between; align-items: center; padding: 0 32px 0 24px; }
.brand { display: flex; align-items: center; gap: 12px; }
.logo { fill: #1a1a1a; }
.brand-name { font-size: 24px; font-weight: 700; line-height: 32px; padding-top: 2px; }
.tools { display: flex; align-items: center; }
.search { width: 360px; height: 48px; border-radius: 24px; background: #e5e6e7; display: flex; align-items: center; gap: 10px; padding-left: 14px; font-size: 18px; letter-spacing: -.1px; color: #666; }
.search svg { color: #555; }
.help { margin-left: 18px; }
.apps { margin-left: 28px; }
.avatar { margin-left: 26px; width: 48px; height: 48px; border-radius: 50%; background: #c84801; color: #fff; font-size: 18.500px; display: flex; align-items: center; justify-content: center; -webkit-text-stroke: .2px; }
.shell { display: flex; }
.sidebar { width: 308px; padding-top: 23px; color: #5a5a5a; }
.building { margin-left: 48px; }
.site { display: flex; align-items: center; gap: 10px; height: 24px; margin: 7px 0 0 29px; color: #1a1a1a; font-size: 18px; font-weight: 700; }
.site span { padding-top: 2px; }
.group { display: flex; align-items: center; gap: 6px; height: 44px; padding-left: 26px; color: #1a1a1a; }
.group-name { letter-spacing: .38px; padding-top: 1px; -webkit-text-stroke: .35px; }
.site + .group { margin-top: 32px; }
.item { display: flex; align-items: center; height: 44px; padding: 2px 0 0 48px; letter-spacing: .12px; }
.item.active { background: #006fcf; color: #fff; box-shadow: 0 3px 5px rgba(0,0,0,.15); }
.settings { margin-top: 8px; border-top: 1px solid #d8dadc; height: 61px; padding-left: 25px; gap: 5px; }
.settings .group-name { padding-top: 0; letter-spacing: .28px; }
.main { width: 1396px; display: flex; flex-direction: column; gap: 16px; }
.card { background: #fcfcfe; border: 1px solid #dcdddf; border-radius: 10px; box-shadow: 0 2px 4px rgba(0,0,0,.2); }
.map-card { height: 668px; padding: 47px 47px 0; }
.map-head { display: flex; justify-content: space-between; height: 84px; }
.crumbs { display: flex; align-items: center; font-size: 14px; height: 32px; color: #5a5a5a; }
.c-site { width: 107px; letter-spacing: .08px; }
.slash { width: 49px; padding-left: 20px; }
.c-floor { width: 55px; }
.s2 { width: 52px; padding-left: 23px; }
.c-area { width: 85px; letter-spacing: .2px; -webkit-text-stroke: .3px; }
.chev { fill: none; stroke: #444; stroke-width: 1.3; }
h1 { font-size: 18px; line-height: 24px; margin: 4px 0 0; }
.dates { width: 282px; height: 40px; border: 1.5px solid #111; border-radius: 4px; display: flex; align-items: center; padding-left: 11px; }
.date { width: 84px; letter-spacing: .28px; padding-top: 1px; }
.dates .date + svg { margin: 0 11px 0 20px; }
.dates .cal { margin-left: 26px; }
.dates .date + svg.cal { margin: 0 0 0 26px; }
.map-body { display: flex; justify-content: space-between; padding-left: 219px; }
.plan { margin-top: 1px; }
.map-side { width: 131px; height: 512px; display: flex; flex-direction: column; justify-content: space-between; align-items: flex-end; }
.legend { list-style: none; margin: 0; width: 131px; height: 320px; padding: 15px; border: 1px solid #d6d6d8; border-radius: 8px; display: flex; flex-direction: column; gap: 20px; font-size: 14px; letter-spacing: .25px; color: #5a5a5a; }
.legend li { height: 24px; display: flex; align-items: center; gap: 8px; }
.sw { width: 24px; height: 24px; border-radius: 4px; border: 1px solid #a9a9a9; flex: none; }
.none { background: #cdcad6; }
.zero { background: #f2effd; }
.l1 { background: #ab78fb; }
.l2 { background: #825cd6; }
.l3 { background: #5841af; }
.l4 { background: #2c2588; }
.l5 { background: #000a5e; border-color: #000a5e; }
.zoom { display: flex; flex-direction: column; gap: 16px; }
.zoom button { width: 48px; height: 48px; border: 0; padding: 0; border-radius: 50%; background: #ededee; display: flex; align-items: center; justify-content: center; }
.zoom path { stroke: #1a1a1a; stroke-width: 1.8; }
.room text { font-size: 4px; text-anchor: middle; fill: #1d1352; opacity: .65; }
.ref text { font-size: 5.5px; text-anchor: middle; fill: #444; }
.nic text { font-size: 8.5px; text-anchor: middle; fill: #aaa7b2; letter-spacing: .5px; }
.stats-card { height: 229px; padding: 11px 23px 0; }
.tabs { display: flex; height: 47px; border-bottom: 1px solid #e0e0e2; font-size: 18px; }
.tab { height: 48px; padding: 0 24px; display: flex; align-items: center; color: #5a5a5a; letter-spacing: .48px; -webkit-text-stroke: .35px; }
.tab + .tab { margin-left: 12px; }
.tab.on { width: 214px; color: #1a1a1a; border-bottom: 3px solid #006fcf; padding-top: 3px; }
.actions { margin-left: auto; display: flex; gap: 20px; align-items: center; padding-right: 26px; }
.scope { display: flex; align-items: center; justify-content: center; height: 24px; margin: 13px 0 15px; }
.scope-name { margin-right: 16px; letter-spacing: .1px; }
.small { font-size: 12px; color: #5a5a5a; line-height: 24px; }
.s-days { width: 73px; border-right: 1px solid #e0e0e2; }
.s-hours { padding-left: 7px; letter-spacing: .08px; }
.stats { display: flex; padding-left: 24px; }
.stat { height: 93px; padding-top: 13px; margin-right: 47px; }
.stat + .stat { border-left: 1px solid #dfe0e2; padding-left: 47px; }
.avg { display: flex; width: 233px; padding-top: 6px; }
.avg + .avg { width: 280px; }
.avg > div:first-child { width: 153px; padding-top: 7px; }
.t1 { width: 204px; }
.t2 { width: 218px; }
.t3 { width: 176px; margin-right: 0; }
.t3 .value { letter-spacing: -.52px; }
.label { line-height: 20px; color: #5a5a5a; letter-spacing: .06px; }
.value { font-size: 24px; line-height: 28px; margin-top: 12px; letter-spacing: .08px; }
.pill { width: 78px; height: 32px; border-radius: 16px; margin-top: 15px; display: flex; align-items: center; gap: 11px; padding-left: 15px; font-size: 14px; letter-spacing: .3px; -webkit-text-stroke: .25px; }
.pill svg { fill: none; stroke: currentColor; stroke-width: 1.5; }
.down { background: #fecaca; color: #a80d12; }
.up { background: #cde9cb; color: #1c5c20; }
.ring { width: 80px; height: 80px; display: grid; place-items: center; font-size: 24px; }
.ring > * { grid-area: 1 / 1; }
.ring span { margin-right: 2px; }
```
